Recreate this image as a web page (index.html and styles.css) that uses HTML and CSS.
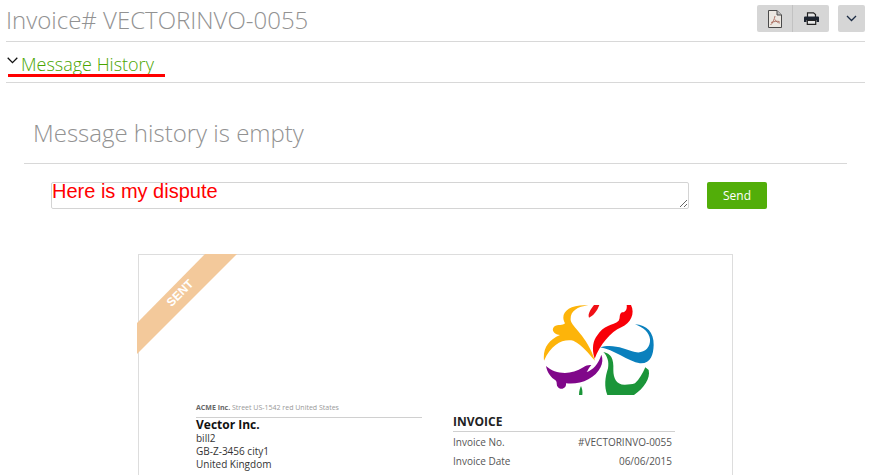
FILE: index.html
```html
<!DOCTYPE html>
<html lang="en">
<head>
<meta charset="UTF-8">
<title>Invoice# VECTORINVO-0055</title>
<link rel="stylesheet" href="styles.css">
</head>
<body>
<div class="page">
  <div class="title-bar">
    <h1 class="title">Invoice# VECTORINVO-0055</h1>
    <div class="actions">
      <div class="btn-group">
        <button class="tool-btn" type="button" aria-label="PDF">
          <svg width="14" height="18" viewBox="0 0 14 18"><path d="M.5.5H9L13.500 5v12.500H.5z" fill="#ece8e2" stroke="#4a4a4a"/><path d="M9 .5V5h4.500" fill="#bbb" stroke="#4a4a4a"/><path d="M7 6c-.6 3-2 7-4.500 9M7 9.500c1 2 3 3.500 5 3.500M3 12.500c3-1 6-1.500 8.500-1" fill="none" stroke="#a86a5c" stroke-width=".9"/></svg>
        </button>
        <button class="tool-btn tool-btn-last" type="button" aria-label="Print">
          <svg width="15" height="13" viewBox="0 0 15 13"><path d="M3.500 5V.8h6L11.500 2.500V5" fill="#e4e4e4" stroke="#222" stroke-width="1.200"/><path d="M1 4.500h13a1 1 0 0 1 1 1V10h-2.500V8h-10v2H0V5.500a1 1 0 0 1 1-1z" fill="#1d2430"/><path d="M3.300 8.300h8.400v4H3.300z" fill="#e8e8e8" stroke="#222" stroke-width="1.200"/></svg>
        </button>
      </div>
      <button class="tool-btn tool-btn-single" type="button" aria-label="More">
        <svg width="11" height="7" viewBox="0 0 11 7"><path d="M1 1l4.500 4.500L10 1" fill="none" stroke="#1c2c44" stroke-width="1.300"/></svg>
      </button>
    </div>
  </div>

  <div class="history-bar">
    <svg class="history-arrow" width="11" height="7" viewBox="0 0 11 7"><path d="M.7 .8l4.800 4.800L10.300 .8" fill="none" stroke="#111" stroke-width="1.300"/></svg>
    <span class="history-link">Message History</span>
    <span class="red-mark"></span>
  </div>

  <div class="history">
    <h2 class="history-empty">Message history is empty</h2>
    <form class="reply">
      <textarea class="reply-box">Here is my dispute</textarea>
      <button class="send" type="button">Send</button>
    </form>
  </div>

  <div class="sheet">
    <svg class="ribbon" width="101" height="100" viewBox="0 0 101 100"><path d="M68 0h32L0 100V69z" fill="#f3c99b"/></svg>
    <span class="ribbon-text">SENT</span>

    <div class="sheet-logo">
      <svg width="135" height="90" viewBox="60 45 405 270">
        <path d="M225 212C205 190 190 168 160 152C130 146 95 160 72 212C68 175 85 150 120 135C105 135 92 122 102 110C115 102 128 108 135 100C118 70 145 42 205 46C170 50 150 65 152 90C155 112 200 135 225 212z" fill="#fdb40a"/>
        <path d="M238 45C232 62 220 78 207 83C202 70 215 55 222 45z" fill="#f01016"/>
        <path d="M224 206C214 175 220 150 232 136C240 122 252 113 264 108C275 102 288 100 296 92C302 84 296 72 306 67C316 68 322 58 320 45H333C346 70 332 100 304 112C272 125 240 165 224 206z" fill="#f80008"/>
        <path d="M240 172C280 160 315 178 345 186C370 192 392 175 390 148C388 128 370 112 345 103C380 104 402 128 401 165C400 195 392 222 360 220C325 215 280 178 240 172z" fill="#0a80bd"/>
        <path d="M250 186C272 190 282 205 280 240C280 265 290 285 315 284C326 284 336 283 345 280C358 268 368 250 376 232L386 240C392 265 372 295 342 315H262C252 290 255 262 264 235C268 215 262 198 250 186z" fill="#1b9539"/>
        <path d="M177 315C177 303 180 295 183 288C187 297 188 305 187 315z" fill="#1b9539"/>
        <path d="M78 228C105 252 150 258 190 232C198 226 206 224 214 225C208 232 204 240 200 246C218 240 236 222 244 194C254 218 240 248 205 268C185 280 160 282 138 280C140 294 125 302 114 292C108 285 112 278 108 272C92 262 82 248 78 228z" fill="#80078a"/>
      </svg>
    </div>

    <div class="sheet-columns">
      <div class="sheet-col sheet-col-from">
        <div class="sender"><b>ACME Inc.</b> Street US-1542 red United States</div>
        <div class="client-name">Vector Inc.</div>
        <div class="client-line">bill2</div>
        <div class="client-line">GB-Z-3456 city1</div>
        <div class="client-line">United Kingdom</div>
      </div>
      <div class="sheet-col sheet-col-meta">
        <div class="meta-head">INVOICE</div>
        <div class="meta-row"><span>Invoice No.</span><span>#VECTORINVO-0055</span></div>
        <div class="meta-row"><span>Invoice Date</span><span>06/06/2015</span></div>
      </div>
    </div>
  </div>
</div>
</body>
</html>
```

FILE: styles.css
```css
html, body {
  margin: 0;
  height: 100%;
  overflow: hidden;
  background: #fff;
}
body {
  font-family: "Open Sans", sans-serif;
  color: #333;
}
.page {
  padding: 0 7px 0 6px;
}
.title-bar {
  display: flex;
  justify-content: space-between;
  height: 41px;
  border-bottom: 1px solid #d8d8d8;
}
.title {
  margin: 3px 0 0;
  font-size: 24px;
  line-height: 33px;
  font-weight: 300;
  color: #929292;
}
.actions {
  display: flex;
  gap: 9px;
  padding-top: 5px;
}
.btn-group {
  display: flex;
}
.tool-btn {
  display: flex;
  align-items: center;
  justify-content: center;
  width: 36px;
  height: 27px;
  padding: 0;
  border: 0;
  border-right: 1px solid #c2c2c2;
  border-radius: 2px 0 0 2px;
  background: #d6d6d6;
}
.tool-btn-last {
  border-right: 0;
  border-radius: 0 2px 2px 0;
}
.tool-btn-single {
  width: 27px;
  border-right: 0;
  border-radius: 2px;
}
.history-bar {
  position: relative;
  display: flex;
  align-items: center;
  height: 40px;
  border-bottom: 1px solid #d8d8d8;
}
.history-arrow {
  margin: 0 3px 0 1px;
  position: relative;
  top: -2px;
}
.history-link {
  font-size: 18px;
  line-height: 24px;
  font-weight: 300;
  color: #4aa500;
  position: relative;
  top: 2px;
}
.red-mark {
  position: absolute;
  left: 2px;
  top: 32px;
  width: 157px;
  height: 3px;
  background: #f00;
}
.history {
  margin: 0 18px;
}
.history-empty {
  margin: 0;
  padding: 33px 0 14px 9px;
  font-size: 24px;
  line-height: 33px;
  font-weight: 300;
  color: #929292;
  border-bottom: 1px solid #d8d8d8;
}
.reply {
  display: flex;
  align-items: flex-start;
  gap: 18px;
  padding: 18px 0 0 27px;
}
.reply-box {
  box-sizing: border-box;
  width: 638px;
  height: 27px;
  margin: 0;
  padding: 0;
  border: 1px solid #d4d4d4;
  border-radius: 2px;
  font-family: "Liberation Sans", Arial, sans-serif;
  font-size: 20px;
  line-height: 16px;
  color: #f00;
}
.send {
  width: 60px;
  height: 27px;
  padding: 0;
  border: 0;
  border-radius: 2px;
  background: #52ae09;
  color: #fff;
  font-family: "Open Sans", sans-serif;
  font-size: 12px;
}
.sheet {
  position: relative;
  box-sizing: border-box;
  width: 595px;
  height: 260px;
  margin: 45px 0 0 132px;
  padding: 0 57px;
  border: 1px solid #ddd;
}
.ribbon {
  position: absolute;
  left: -2px;
  top: -1px;
}
.ribbon-text {
  position: absolute;
  left: 25px;
  top: 31px;
  font-family: "Liberation Sans", Arial, sans-serif;
  font-size: 12px;
  line-height: 14px;
  font-weight: bold;
  color: #fff;
  transform: rotate(-45deg);
}
.sheet-logo {
  display: flex;
  justify-content: flex-end;
  padding-top: 50px;
}
.sheet-columns {
  display: flex;
  justify-content: space-between;
  padding-top: 6px;
}
.sheet-col-from {
  width: 226px;
}
.sheet-col-meta {
  width: 222px;
  padding-top: 13px;
}
.sender {
  height: 16px;
  font-size: 7px;
  line-height: 13px;
  color: #999;
  border-bottom: 1px solid #d0d0d0;
}
.sender b {
  color: #666;
}
.client-name {
  font-size: 12px;
  line-height: 14px;
  font-weight: 700;
  color: #111;
}
.client-line {
  font-size: 10px;
  line-height: 13px;
  color: #333;
}
.meta-head {
  height: 17px;
  font-size: 12px;
  line-height: 16px;
  font-weight: 700;
  color: #222;
  border-bottom: 1px solid #d0d0d0;
}
.meta-row {
  display: flex;
  justify-content: space-between;
  padding: 3px 3px 0 0;
  height: 16px;
  font-size: 10px;
  line-height: 14px;
  color: #555;
}
```
